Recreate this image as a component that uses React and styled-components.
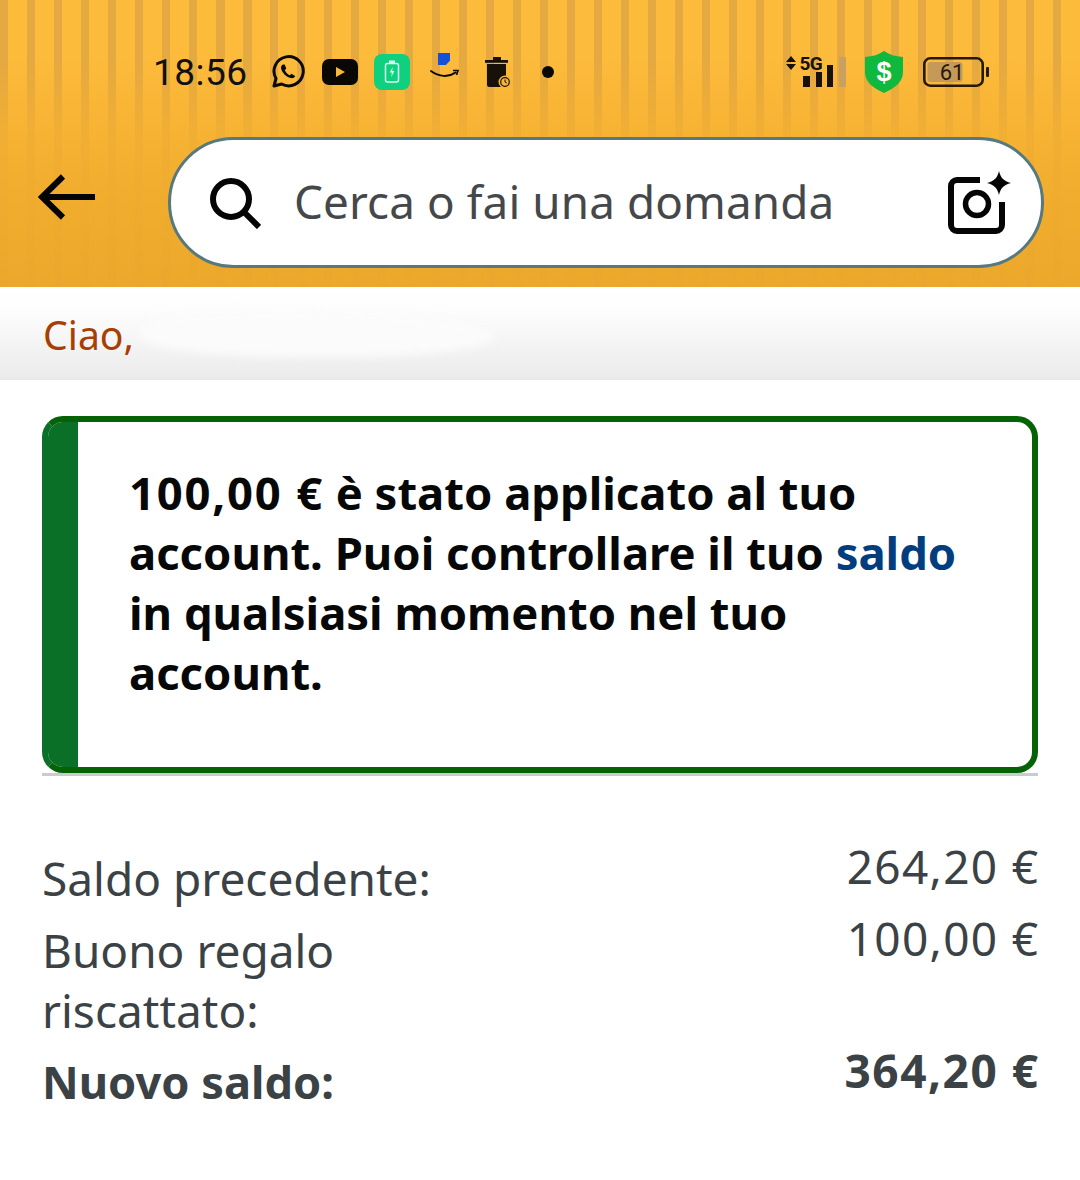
import React from 'react';
import styled, { createGlobalStyle } from 'styled-components';

const Global = createGlobalStyle`
  html, body { margin: 0; padding: 0; background: #fff; }
  body { font-family: "Noto Sans", "Open Sans", sans-serif; }
`;

const Page = styled.div`
  width: 1080px;
  height: 1180px;
  overflow: hidden;
  background: #fff;
`;

const Header = styled.header`
  height: 287px;
  box-sizing: border-box;
  background:
    linear-gradient(180deg, rgba(248,180,52,0) 0, rgba(248,180,52,0) 60px, rgba(245,176,48,.75) 130px, rgba(240,172,44,.92) 190px, rgba(234,167,42,.95) 100%),
    repeating-linear-gradient(90deg, #e4a941 0 8.500px, #fdbb3b 8.500px 27px);
  display: flex;
  flex-direction: column;
`;

const StatusBar = styled.div`
  height: 137px;
  box-sizing: border-box;
  padding: 7px 90px 0 153px;
  display: flex;
  align-items: center;
  color: #111;
`;

const Time = styled.span`
  font-family: "Roboto", sans-serif;
  font-size: 37px;
  letter-spacing: .5px;
  color: #111;
  width: 118px;
  flex: none;
`;

const NotificationIcons = styled.div`
  display: flex;
  align-items: center;
  flex: 1;
`;

const IconSlot = styled.div`
  width: ${p => p.$w}px;
  height: 40px;
  flex: none;
  display: flex;
  align-items: center;
`;

const RaisedIcon = styled.div`
  display: flex;
  margin-bottom: 12px;
`;

const StatusIcons = styled.div`
  display: flex;
  align-items: center;
`;

const SearchRow = styled.div`
  display: flex;
  align-items: flex-start;
  padding: 0 36px 0 38px;
`;

const BackButton = styled.div`
  width: 130px;
  height: 131px;
  padding-bottom: 12px;
  box-sizing: border-box;
  flex: none;
  display: flex;
  align-items: center;
`;

const SearchBar = styled.div`
  flex: 1;
  height: 131px;
  box-sizing: border-box;
  border: 3px solid #56797f;
  border-radius: 66px;
  background: #fff;
  display: flex;
  align-items: center;
  padding: 0 28px 0 38px;
`;

const SearchText = styled.span`
  flex: 1;
  font-size: 45.800px;
  color: #45484a;
  margin: 0 0 4px 33px;
  letter-spacing: .1px;
`;

const Greeting = styled.div`
  position: relative;
  height: 93px;
  box-sizing: border-box;
  padding: 25px 0 0 43px;
  background: linear-gradient(180deg, #fff 0%, #fdfdfd 25%, #ebebeb 98%, #e4e4e4 100%);
  font-size: 39.200px;
  line-height: 46px;
  color: #a83f00;
`;

const RedactedSmear = styled.div`
  position: absolute;
  left: 140px;
  top: 24px;
  width: 355px;
  height: 46px;
  border-radius: 40% 60% 50% 50%;
  background: #fbfbfb;
  filter: blur(5px);
`;

const Body = styled.main`
  padding: 36px 42px 0;
`;

const AlertShadow = styled.div`
  border-bottom: 3px solid #c9cccc;
`;

const Alert = styled.section`
  height: 357px;
  box-sizing: border-box;
  border: 6px solid #056305;
  border-left-color: #0a6f27;
  border-radius: 21px;
  padding: 40px 60px 0 81px;
  background: linear-gradient(90deg, #0a6f27 30px, #fff 30px) padding-box;
  font-size: 45.400px;
  font-weight: 700;
  line-height: 60px;
  color: #060808;
`;

const AlertLink = styled.span`
  color: #023d7d;
`;

const Money = styled.span`
  letter-spacing: 1.800px;
`;

const Summary = styled.div`
  margin-top: 72px;
  display: grid;
  grid-template-columns: 1fr auto;
  color: #3b4245;
  font-size: 46px;
  line-height: 60px;
`;

const Label = styled.div`
  width: 420px;
  padding-top: ${p => p.$top || 0}px;
  font-weight: ${p => (p.$bold ? 700 : 400)};
  font-size: ${p => (p.$bold ? 45.2 : 46)}px;
`;

const Amount = styled.div`
  text-align: right;
  margin-top: ${p => p.$mt || 0}px;
  margin-right: ${p => (p.$bold ? -1.5 : -1.3)}px;
  font-weight: ${p => (p.$bold ? 700 : 400)};
  letter-spacing: ${p => (p.$bold ? 1.5 : 1.3)}px;
`;

const WhatsApp = () => (
  <svg width="34" height="34" viewBox="0 0 34 34" fill="none">
    <path d="M3 31l2-7.500A14.600 14.600 0 1 1 10.600 29L3 31Z" stroke="#0c0a06" strokeWidth="3" strokeLinejoin="round" />
    <path d="M12 9.500c-1.600.8-2.400 2.400-1.800 4.400 1.200 4 5 8 9.500 9.200 2 .5 3.800-.4 4.500-2.100l-3.700-2.300-1.700 1.500c-2.200-.9-4-2.800-5-5l1.500-1.800L13.700 9.500H12Z" fill="#0c0a06" />
  </svg>
);

const YouTube = () => (
  <svg width="36" height="26" viewBox="0 0 36 26">
    <rect width="36" height="26" rx="7" fill="#0a0805" />
    <path d="M14 8v10l9-5-9-5Z" fill="#f9b83a" />
  </svg>
);

const BatteryApp = () => (
  <svg width="36" height="36" viewBox="0 0 36 36" fill="none">
    <rect width="36" height="36" rx="8" fill="#0fd07f" />
    <rect x="11.500" y="9.500" width="13" height="18.500" rx="2" stroke="#d8fff0" strokeWidth="1.500" />
    <rect x="15" y="6.500" width="6" height="2.500" fill="#d8fff0" />
    <path d="M18.700 13l-3 5.500h2.200l-.6 4.500 3.200-6h-2.300l.5-4Z" fill="#d8fff0" />
  </svg>
);

const AmazonMark = () => (
  <svg width="30" height="26" viewBox="0 0 30 26" fill="none">
    <path d="M8 0H20V7.500L16 12H8V0Z" fill="#1450d8" />
    <path d="M1 18c8 6 17.500 6.500 24.500 1.500" stroke="#0a0805" strokeWidth="2" strokeLinecap="round" />
    <path d="M23 17.500h5l-1.500 4.500" stroke="#0a0805" strokeWidth="1.600" />
  </svg>
);

const Trash = () => (
  <svg width="28" height="32" viewBox="0 0 28 32">
    <rect x="0" y="4" width="23" height="2.800" fill="#17110a" />
    <rect x="8" y="1" width="8" height="3" fill="#17110a" />
    <path d="M2 8h19v23H4.500A2.500 2.500 0 0 1 2 28.500V8Z" fill="#17110a" />
    <circle cx="20" cy="26" r="6.500" fill="#f6b638" />
    <circle cx="20" cy="26" r="4.300" fill="none" stroke="#17110a" strokeWidth="1.200" />
    <path d="M20 23.500V26l1.800 1" stroke="#17110a" strokeWidth="1" fill="none" />
  </svg>
);

const Signal = () => (
  <svg width="62" height="44" viewBox="0 -4 62 44">
    <path d="M1 8l5-6 5 6H1ZM1 10h10l-5 6-5-6Z" fill="#17110a" />
    <text x="14.500" y="16" fontFamily="Roboto, sans-serif" fontSize="19" fontWeight="700" fill="#17110a" letterSpacing="-.6">5G</text>
    <rect x="18" y="22" width="7" height="11" fill="#17110a" />
    <rect x="31" y="18" width="6" height="15" fill="#17110a" />
    <rect x="42" y="11" width="6" height="22" fill="#17110a" />
    <rect x="54" y="3" width="7" height="30" fill="#c9a060" />
  </svg>
);

const Shield = () => (
  <svg width="40" height="42" viewBox="0 0 40 42">
    <path d="M20 0c5 3.500 11 5.500 19 6V21c0 10-8 16-19 21C9 37 1 31 1 21V6c8-.5 14-2.500 19-6Z" fill="#10b83e" />
    <text x="20" y="30" textAnchor="middle" fontFamily="Liberation Sans, sans-serif" fontSize="27" fontWeight="700" fill="#fff">$</text>
  </svg>
);

const Battery = () => (
  <svg width="67" height="30" viewBox="0 0 67 30">
    <rect x="1.300" y="1.300" width="58.400" height="27.400" rx="6" fill="none" stroke="#26190a" strokeWidth="2.600" />
    <rect x="4.500" y="5" width="35" height="20" rx="3" fill="#c59a58" />
    <rect x="63" y="10" width="3" height="10" rx="1" fill="#26190a" />
    <text x="29" y="23" textAnchor="middle" fontFamily="Roboto, sans-serif" fontSize="22" fill="#26190a">61</text>
  </svg>
);

const ArrowBack = () => (
  <svg width="58" height="46" viewBox="0 0 58 46" fill="none" stroke="#050505" strokeWidth="6">
    <path d="M57 23H4" />
    <path d="M25 2.500 4 23l21 20.500" />
  </svg>
);

const SearchGlyph = () => (
  <svg width="52" height="52" viewBox="0 0 52 52" fill="none" stroke="#050505" strokeWidth="6">
    <circle cx="22" cy="22" r="18" />
    <path d="M35 35l15 15" />
  </svg>
);

const CameraSpark = () => (
  <svg width="66" height="66" viewBox="0 0 66 66" fill="none">
    <path d="M33 10H10a6 6 0 0 0-6 6v39a6 6 0 0 0 6 6h39a6 6 0 0 0 6-6V32" stroke="#050505" strokeWidth="6" />
    <circle cx="30" cy="34" r="11.500" stroke="#050505" strokeWidth="5.500" />
    <path d="M52 1c1.500 6.500 4.500 10 12 12-7.500 2-10.500 5.500-12 12-1.500-6.500-4.500-10-12-12 7.500-2 10.500-5.500 12-12Z" fill="#050505" />
  </svg>
);

export default function App() {
  return (
    <Page>
      <Global />
      <Header>
        <StatusBar>
          <Time>18:56</Time>
          <NotificationIcons>
            <IconSlot $w={51}><WhatsApp /></IconSlot>
            <IconSlot $w={52}><YouTube /></IconSlot>
            <IconSlot $w={56}><BatteryApp /></IconSlot>
            <IconSlot $w={55}><RaisedIcon><AmazonMark /></RaisedIcon></IconSlot>
            <IconSlot $w={57}><Trash /></IconSlot>
            <IconSlot $w={12}>
              <svg width="12" height="12"><circle cx="6" cy="6" r="6" fill="#0a0805" /></svg>
            </IconSlot>
          </NotificationIcons>
          <StatusIcons>
            <IconSlot $w={79}><Signal /></IconSlot>
            <IconSlot $w={59}><Shield /></IconSlot>
            <IconSlot $w={67}><Battery /></IconSlot>
          </StatusIcons>
        </StatusBar>
        <SearchRow>
          <BackButton><ArrowBack /></BackButton>
          <SearchBar>
            <SearchGlyph />
            <SearchText>Cerca o fai una domanda</SearchText>
            <CameraSpark />
          </SearchBar>
        </SearchRow>
      </Header>
      <Greeting>
        Ciao,
        <RedactedSmear />
      </Greeting>
      <Body>
        <AlertShadow>
          <Alert>
            <Money>100,00 €</Money> è stato applicato al tuo account. Puoi controllare il tuo <AlertLink>saldo</AlertLink> in qualsiasi momento nel tuo account.
          </Alert>
        </AlertShadow>
        <Summary>
          <Label>Saldo precedente:</Label>
          <Amount $mt={-12}>264,20 €</Amount>
          <Label $top={12}>Buono regalo riscattato:</Label>
          <Amount>100,00 €</Amount>
          <Label $top={12} $bold>Nuovo saldo:</Label>
          <Amount $bold>364,20 €</Amount>
        </Summary>
      </Body>
    </Page>
  );
}
